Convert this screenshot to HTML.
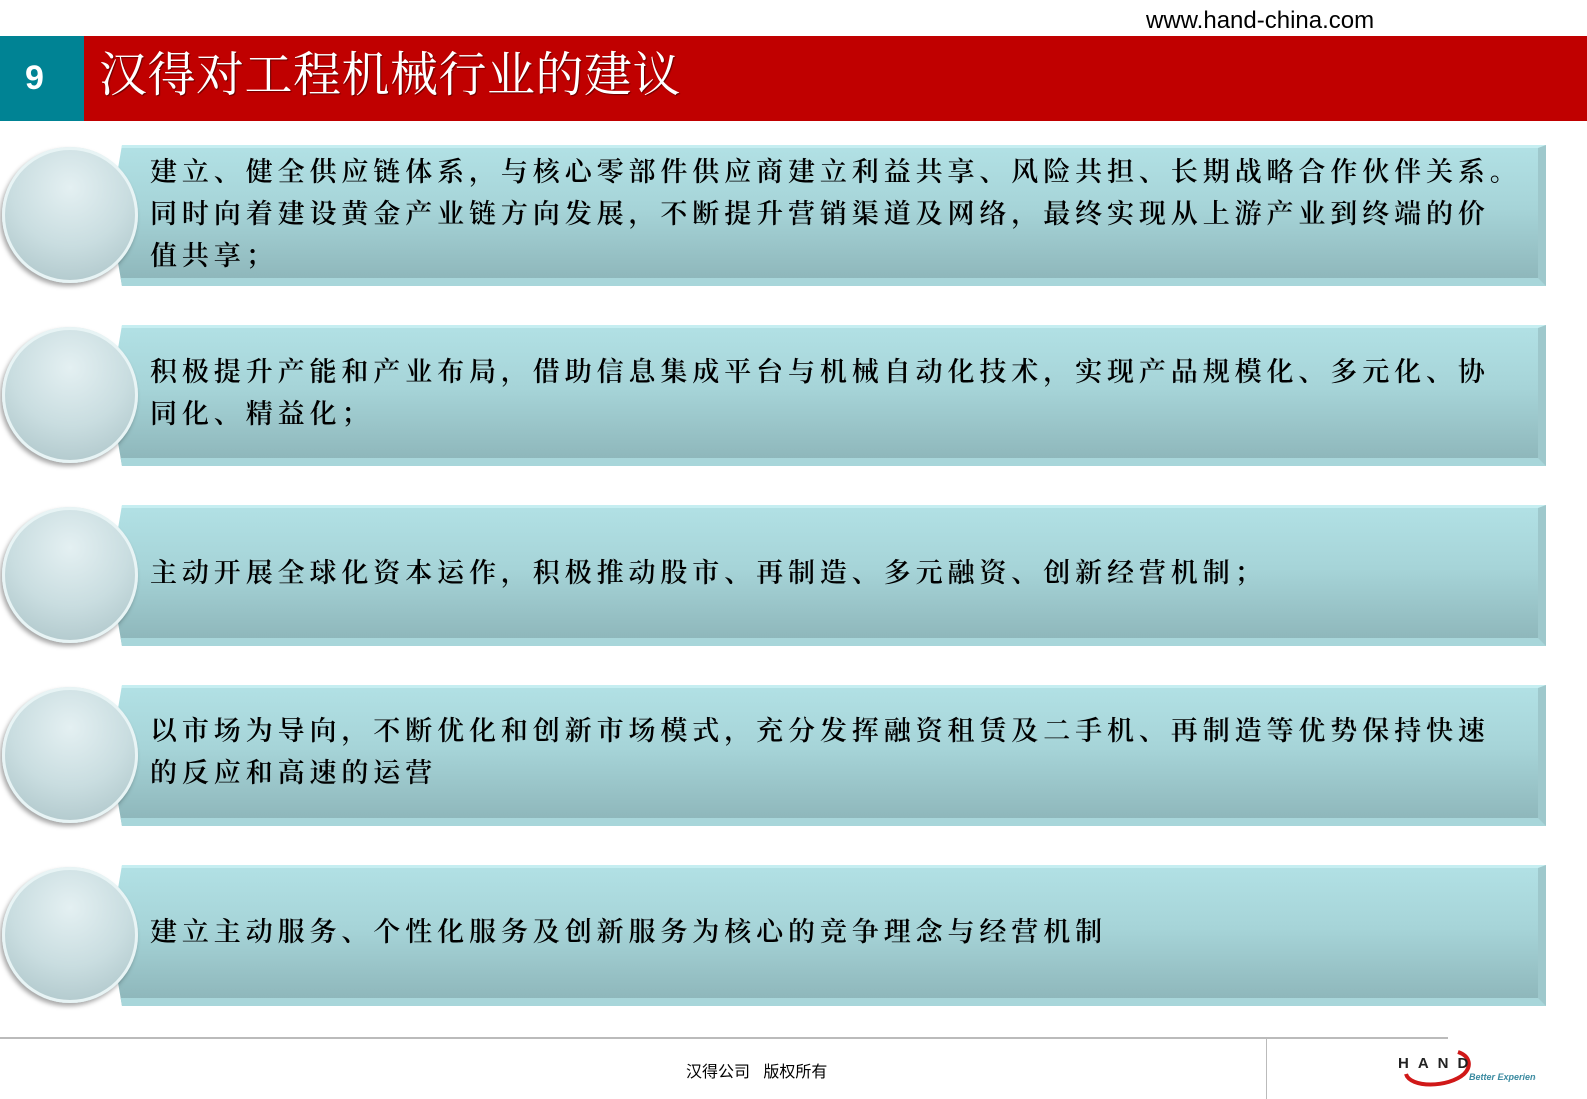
<!DOCTYPE html>
<html><head><meta charset="utf-8">
<style>
*{margin:0;padding:0;box-sizing:border-box}
body{width:1587px;height:1099px;background:#fff;position:relative;overflow:hidden;font-family:"Liberation Sans","Noto Sans CJK SC",sans-serif}
.url{position:absolute;left:1146px;top:7px;font-size:24px;color:#000}
.bar{position:absolute;left:0;top:36px;width:1587px;height:85px;background:#c00000}
.num{position:absolute;left:0;top:36px;width:84px;height:85px;background:#008394;color:#fff;font-weight:bold;font-size:34px;padding-left:0;line-height:85px}
.num span{position:absolute;left:25px}
.title{position:absolute;left:99px;top:36px;height:85px;line-height:80px;color:#fff;font-size:48px;letter-spacing:0.5px;font-family:"Liberation Serif","Noto Serif CJK SC",serif;text-shadow:1px 1px 1px #600}
.panel{position:absolute;left:110px;width:1436px;height:141px;
 background:linear-gradient(#b2e1e5 0%,#a6d4d8 45%,#8cb4b8 100%);
 clip-path:polygon(12px 0,100% 0,100% 100%,12px 100%,0 50%);
 box-shadow:0 3px 4px rgba(0,0,0,.3)}
.panel:before{content:"";position:absolute;inset:0;border-top:3px solid #c6eef1;border-right:8px solid #9ec8cc;border-bottom:8px solid #a8d6da}
.circle{position:absolute;left:2px;width:136px;height:136px;border-radius:50%;
 background:radial-gradient(circle at 50% 30%,#e4f0f2 0%,#c9dde0 50%,#a6bfc3 100%);
 box-shadow:-2px 3px 5px rgba(0,0,0,.35), inset 0 0 0 3px #e8f4f5}
.txt{position:absolute;left:150px;width:1400px;font-family:"Liberation Serif","Noto Serif CJK SC",serif;font-size:27px;font-weight:600;letter-spacing:4.9px;line-height:42px;color:#000}
.fline{position:absolute;left:0;top:1037px;width:1448px;height:2px;background:#bbb}
.vline{position:absolute;left:1266px;top:1039px;width:1px;height:60px;background:#bbb}
.foot{position:absolute;left:686px;top:1058px;font-size:16px;color:#000}
</style></head><body>
<div class="url">www.hand-china.com</div>
<div class="bar"></div><div class="num"><span>9</span></div>
<div class="title">汉得对工程机械行业的建议</div>

<div class="panel" style="top:145px"></div><div class="circle" style="top:147px"></div>
<div class="txt" style="top:151px">建立、健全供应链体系，与核心零部件供应商建立利益共享、风险共担、长期战略合作伙伴关系。<br>同时向着建设黄金产业链方向发展，不断提升营销渠道及网络，最终实现从上游产业到终端的价<br>值共享；</div>

<div class="panel" style="top:325px"></div><div class="circle" style="top:327px"></div>
<div class="txt" style="top:351px">积极提升产能和产业布局，借助信息集成平台与机械自动化技术，实现产品规模化、多元化、协<br>同化、精益化；</div>

<div class="panel" style="top:505px"></div><div class="circle" style="top:507px"></div>
<div class="txt" style="top:552px">主动开展全球化资本运作，积极推动股市、再制造、多元融资、创新经营机制；</div>

<div class="panel" style="top:685px"></div><div class="circle" style="top:687px"></div>
<div class="txt" style="top:710px">以市场为导向，不断优化和创新市场模式，充分发挥融资租赁及二手机、再制造等优势保持快速<br>的反应和高速的运营</div>

<div class="panel" style="top:865px"></div><div class="circle" style="top:867px"></div>
<div class="txt" style="top:911px">建立主动服务、个性化服务及创新服务为核心的竞争理念与经营机制</div>

<div class="fline"></div><div class="vline"></div>
<div class="foot">汉得公司&nbsp;&nbsp;&nbsp;版权所有</div>
<svg style="position:absolute;left:1396px;top:1044px" width="140" height="44">
 <path d="M10 30 C14 44 52 44 68 30 C76 22 74 12 62 8" fill="none" stroke="#d01818" stroke-width="4"/>
 <text x="2" y="24" font-family="Liberation Sans" font-weight="bold" font-size="15" letter-spacing="9" fill="#222">HAND</text>
 <text x="73" y="36" font-family="Liberation Sans" font-style="italic" font-weight="bold" font-size="9" fill="#3a8aa0">Better Experience</text>
</svg>
</body></html>
